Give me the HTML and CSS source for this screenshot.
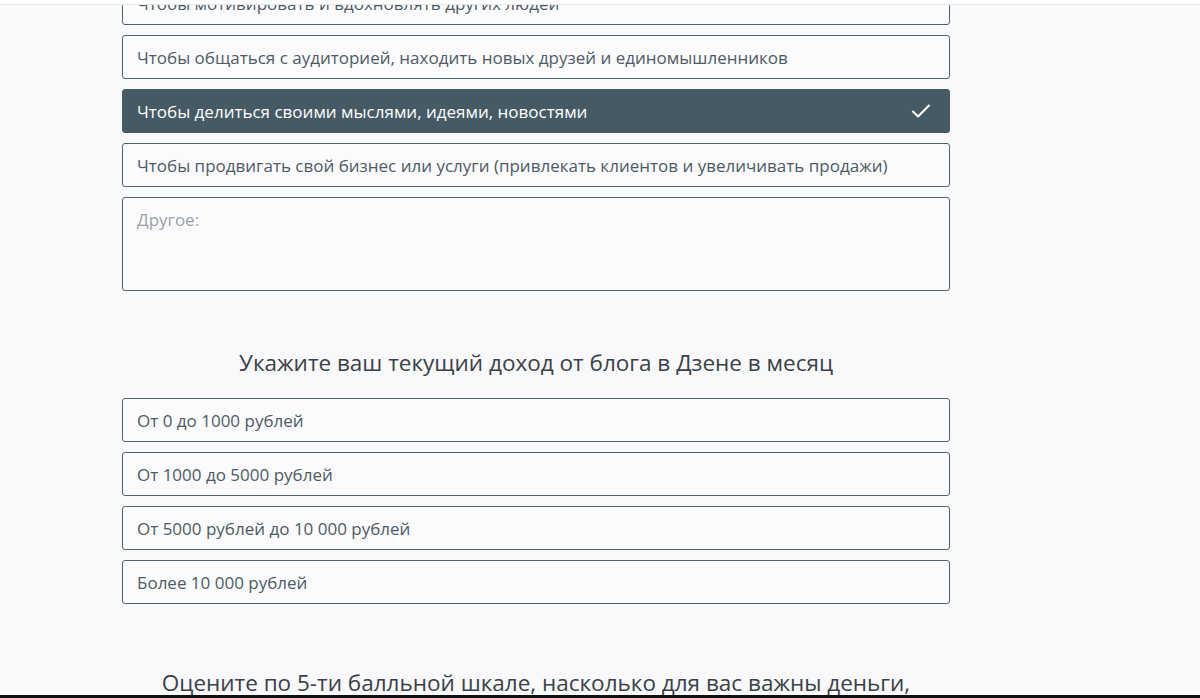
FILE: index.html
```html
<!DOCTYPE html>
<html lang="ru">
<head>
    <meta charset="UTF-8">
    <meta name="viewport" content="width=device-width, initial-scale=1.0">
    <title>Опрос</title>
    <link rel="stylesheet" href="styles.css">
</head>
<body>
    <div class="topbar"></div>

    <div class="form">
        <div class="question">
            <div class="option">Чтобы мотивировать и вдохновлять других людей</div>
            <div class="option">Чтобы общаться с аудиторией, находить новых друзей и единомышленников</div>
            <div class="option selected">
                Чтобы делиться своими мыслями, идеями, новостями
                <svg class="check" width="20" height="16" viewBox="0 0 20 16">
                    <polyline points="2,8.5 7,13.5 18,2.5" fill="none" stroke="#fff" stroke-width="2" stroke-linecap="round" stroke-linejoin="round"/>
                </svg>
            </div>
            <div class="option">Чтобы продвигать свой бизнес или услуги (привлекать клиентов и увеличивать продажи)</div>
            <textarea class="other" placeholder="Другое:"></textarea>
        </div>

        <div class="question">
            <h2 class="title">Укажите ваш текущий доход от блога в Дзене в месяц</h2>
            <div class="option">От 0 до 1000 рублей</div>
            <div class="option">От 1000 до 5000 рублей</div>
            <div class="option">От 5000 рублей до 10 000 рублей</div>
            <div class="option">Более 10 000 рублей</div>
        </div>

        <div class="question">
            <h2 class="title title-big">Оцените по 5-ти балльной шкале, насколько для вас важны деньги,<br>получаемые от блога</h2>
        </div>
    </div>

    <div class="bottombar"></div>
</body>
</html>
```

FILE: styles.css
```css
html, body {
    margin: 0;
    padding: 0;
}
body {
    font-family: "Open Sans", "Liberation Sans", sans-serif;
    background: #f9f9fb;
    color: #4c5863;
    overflow: hidden;
}
.topbar {
    position: fixed;
    top: 0;
    left: 0;
    right: 0;
    z-index: 2;
    height: 4px;
    background: #fff;
    border-bottom: 1px solid #e6e8eb;
}
.form {
    position: relative;
    width: 828px;
    margin: -19px 0 0 122px;
}
.question {
    display: flex;
    flex-direction: column;
    gap: 10px;
}
.option {
    display: flex;
    align-items: center;
    justify-content: space-between;
    height: 44px;
    box-sizing: border-box;
    padding: 0 18px 0 14px;
    border: 1px solid #52626d;
    border-radius: 3px;
    background: #fbfbfd;
    font-size: 17px;
    color: #4f5a65;
}
.option.selected {
    background: #455a64;
    border-color: #455a64;
    color: #fff;
}
.check {
    display: block;
}
.other {
    height: 94px;
    box-sizing: border-box;
    padding: 10px 14px;
    border: 1px solid #52626d;
    border-radius: 3px;
    background: #fbfbfd;
    font-family: inherit;
    font-size: 17px;
    color: #4f5a65;
    resize: none;
    outline: none;
}
.other::placeholder {
    color: #9aa1a8;
}
.title {
    margin: 57px 0 10px;
    font-size: 22.5px;
    font-weight: 400;
    line-height: 30px;
    text-align: center;
    color: #3a4148;
}
.title-big {
    margin-top: 61px;
    line-height: 36px;
}
.bottombar {
    position: fixed;
    left: 0;
    right: 0;
    bottom: 0;
    z-index: 2;
    height: 3px;
    background: #111;
}
```
